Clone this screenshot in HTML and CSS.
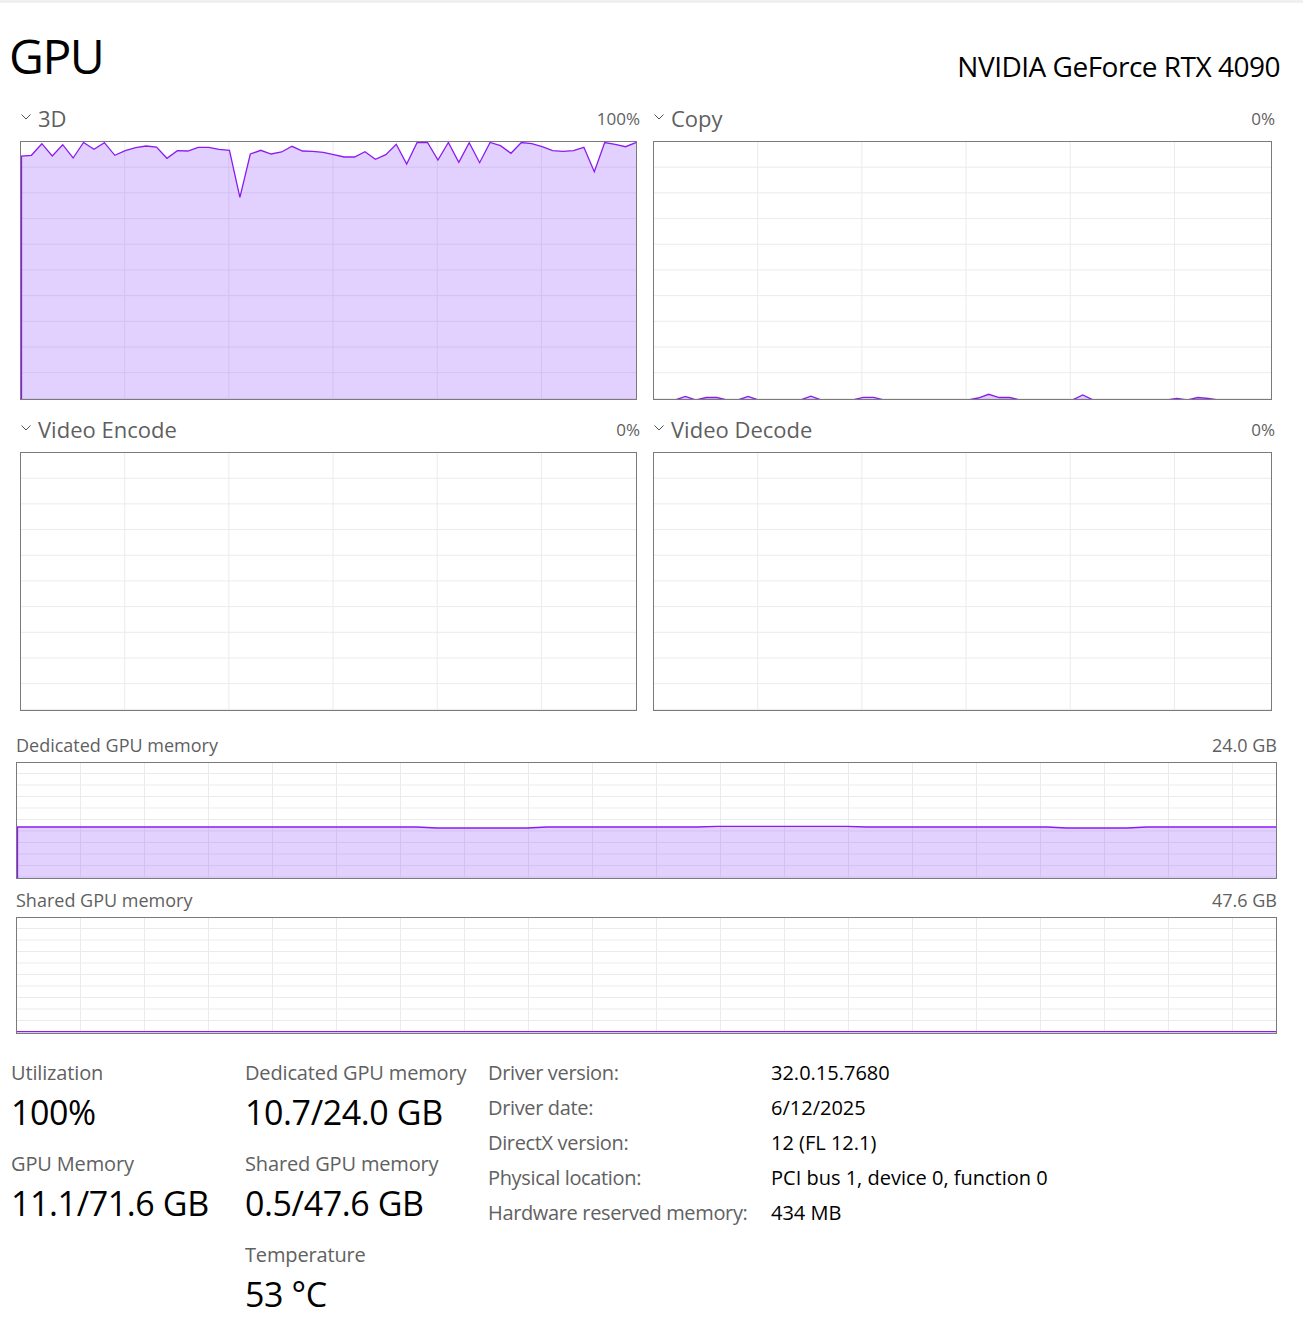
FILE: index.html
```html
<!DOCTYPE html>
<html lang="en">
<head>
<meta charset="utf-8">
<title>GPU</title>
<link rel="stylesheet" href="styles.css">
</head>
<body>
<div class="page">
  <header class="head">
    <h1 class="title">GPU</h1>
    <div class="model">NVIDIA GeForce RTX 4090</div>
  </header>

  <section class="engines">
    <div class="engine">
      <div class="engine-head">
        <span class="engine-name"><svg class="chev" viewBox="0 0 10 6"><polyline points="0.5,0.5 5,5 9.5,0.5"/></svg>3D</span>
        <span class="engine-pct">100%</span>
      </div>
      <div class="graph graph-engine">
        <svg viewBox="0 0 615 257" preserveAspectRatio="none">
          <polygon class="area" points="0,257 0,14 10.42,13.3 20.85,1.7 31.27,14 41.69,2.7 52.12,16 62.54,0.5 72.97,7.3 83.39,0.7 93.81,13.3 104.24,8.7 114.66,5.7 125.08,4 135.51,5 145.93,16.3 156.36,8.7 166.78,9 177.2,5.3 187.63,5.3 198.05,7.3 208.47,8.3 218.9,55.3 229.32,12 239.75,8.3 250.17,12 260.59,10 271.02,4.3 281.44,9 291.86,9.3 302.29,10.3 312.71,12.7 323.14,15 333.56,15 343.98,9.7 354.41,17.3 364.83,12.7 375.25,2.3 385.68,22 396.1,0.5 406.53,0.5 416.95,18 427.37,0.5 437.8,20.3 448.22,0.7 458.64,20.7 469.07,0.5 479.49,3.7 489.92,11.3 500.34,0.5 510.76,1.7 521.19,4.7 531.61,8.7 542.03,9.3 552.46,8.7 562.88,5.3 573.31,29.7 583.73,0.5 594.15,2.3 604.58,4.7 615,0.5 615,257"/>
          <polyline class="line" points="0.5,257 0.5,14 10.42,13.3 20.85,1.7 31.27,14 41.69,2.7 52.12,16 62.54,0.5 72.97,7.3 83.39,0.7 93.81,13.3 104.24,8.7 114.66,5.7 125.08,4 135.51,5 145.93,16.3 156.36,8.7 166.78,9 177.2,5.3 187.63,5.3 198.05,7.3 208.47,8.3 218.9,55.3 229.32,12 239.75,8.3 250.17,12 260.59,10 271.02,4.3 281.44,9 291.86,9.3 302.29,10.3 312.71,12.7 323.14,15 333.56,15 343.98,9.7 354.41,17.3 364.83,12.7 375.25,2.3 385.68,22 396.1,0.5 406.53,0.5 416.95,18 427.37,0.5 437.8,20.3 448.22,0.7 458.64,20.7 469.07,0.5 479.49,3.7 489.92,11.3 500.34,0.5 510.76,1.7 521.19,4.7 531.61,8.7 542.03,9.3 552.46,8.7 562.88,5.3 573.31,29.7 583.73,0.5 594.15,2.3 604.58,4.7 615,0.5"/>
        </svg>
      </div>
    </div>

    <div class="engine">
      <div class="engine-head">
        <span class="engine-name"><svg class="chev" viewBox="0 0 10 6"><polyline points="0.5,0.5 5,5 9.5,0.5"/></svg>Copy</span>
        <span class="engine-pct">0%</span>
      </div>
      <div class="graph graph-engine">
        <svg viewBox="0 0 615 257" preserveAspectRatio="none">
          <polygon class="area" points="0,258 10.42,258 20.85,258 31.27,254.5 41.69,258 52.12,255.5 62.54,255.5 72.97,258 83.39,258 93.81,254.5 104.24,258 114.66,258 125.08,258 135.51,258 145.93,258 156.36,254.2 166.78,258 177.2,258 187.63,258 198.05,258 208.47,255.3 218.9,255.3 229.32,258 239.75,258 250.17,258 260.59,258 271.02,258 281.44,258 291.86,258 302.29,258 312.71,258 323.14,256 333.56,252.3 343.98,255.5 354.41,255.5 364.83,258 375.25,258 385.68,258 396.1,258 406.53,258 416.95,258 427.37,253 437.8,258 448.22,258 458.64,258 469.07,258 479.49,258 489.92,258 500.34,258 510.76,258 521.19,256.3 531.61,258 542.03,255.5 552.46,256.5 562.88,258 573.31,258 583.73,258 594.15,258 604.58,258 615,258"/>
          <polyline class="line" points="0,258 10.42,258 20.85,258 31.27,254.5 41.69,258 52.12,255.5 62.54,255.5 72.97,258 83.39,258 93.81,254.5 104.24,258 114.66,258 125.08,258 135.51,258 145.93,258 156.36,254.2 166.78,258 177.2,258 187.63,258 198.05,258 208.47,255.3 218.9,255.3 229.32,258 239.75,258 250.17,258 260.59,258 271.02,258 281.44,258 291.86,258 302.29,258 312.71,258 323.14,256 333.56,252.3 343.98,255.5 354.41,255.5 364.83,258 375.25,258 385.68,258 396.1,258 406.53,258 416.95,258 427.37,253 437.8,258 448.22,258 458.64,258 469.07,258 479.49,258 489.92,258 500.34,258 510.76,258 521.19,256.3 531.61,258 542.03,255.5 552.46,256.5 562.88,258 573.31,258 583.73,258 594.15,258 604.58,258 615,258"/>
        </svg>
      </div>
    </div>

    <div class="engine">
      <div class="engine-head">
        <span class="engine-name"><svg class="chev" viewBox="0 0 10 6"><polyline points="0.5,0.5 5,5 9.5,0.5"/></svg>Video Encode</span>
        <span class="engine-pct">0%</span>
      </div>
      <div class="graph graph-engine"></div>
    </div>

    <div class="engine">
      <div class="engine-head">
        <span class="engine-name"><svg class="chev" viewBox="0 0 10 6"><polyline points="0.5,0.5 5,5 9.5,0.5"/></svg>Video Decode</span>
        <span class="engine-pct">0%</span>
      </div>
      <div class="graph graph-engine"></div>
    </div>
  </section>

  <section class="mem">
    <div class="mem-head"><span>Dedicated GPU memory</span><span>24.0 GB</span></div>
    <div class="graph graph-mem">
      <svg viewBox="0 0 1259 115" preserveAspectRatio="none">
        <polygon class="area" points="0,115 0,64 400,64 420,65 510,65 530,64 680,64 700,63.4 830,63.4 850,64 1030,64 1050,65 1110,65 1130,64 1259,64 1259,115"/>
        <polyline class="line" points="0.5,115 0.5,64 400,64 420,65 510,65 530,64 680,64 700,63.4 830,63.4 850,64 1030,64 1050,65 1110,65 1130,64 1259,64"/>
      </svg>
    </div>
    <div class="mem-head mem-head-second"><span>Shared GPU memory</span><span>47.6 GB</span></div>
    <div class="graph graph-mem">
      <svg viewBox="0 0 1259 115" preserveAspectRatio="none">
        <polyline class="line" points="0,113.6 1259,113.6"/>
      </svg>
    </div>
  </section>

  <section class="stats">
    <div class="stat-col">
      <div class="stat">
        <div class="stat-label">Utilization</div>
        <div class="stat-value">100%</div>
      </div>
      <div class="stat">
        <div class="stat-label">GPU Memory</div>
        <div class="stat-value">11.1/71.6 GB</div>
      </div>
    </div>
    <div class="stat-col">
      <div class="stat">
        <div class="stat-label">Dedicated GPU memory</div>
        <div class="stat-value">10.7/24.0 GB</div>
      </div>
      <div class="stat">
        <div class="stat-label">Shared GPU memory</div>
        <div class="stat-value">0.5/47.6 GB</div>
      </div>
      <div class="stat">
        <div class="stat-label">Temperature</div>
        <div class="stat-value">53 °C</div>
      </div>
    </div>
    <dl class="props">
      <dt>Driver version:</dt><dd>32.0.15.7680</dd>
      <dt>Driver date:</dt><dd>6/12/2025</dd>
      <dt>DirectX version:</dt><dd>12 (FL 12.1)</dd>
      <dt>Physical location:</dt><dd>PCI bus 1, device 0, function 0</dd>
      <dt>Hardware reserved memory:</dt><dd>434 MB</dd>
    </dl>
  </section>
</div>
</body>
</html>
```

FILE: styles.css
```css
html, body {
  margin: 0;
  padding: 0;
  background: #ffffff;
}

body {
  font-family: "Open Sans", "Noto Sans", sans-serif;
  color: #000000;
}

.page {
  border-top: 3px solid #f0f0f0;
  min-height: 1314px;
}

/* Header */
.head {
  height: 100px;
  display: flex;
  justify-content: space-between;
  align-items: flex-start;
  padding: 0 23px 0 9px;
  box-sizing: border-box;
}

.title {
  margin: 23px 0 0;
  font-size: 48px;
  line-height: 60px;
  font-weight: 400;
  letter-spacing: -1.5px;
}

.model {
  margin-top: 45px;
  font-size: 28px;
  line-height: 36px;
  letter-spacing: -0.5px;
}

/* Engine graphs */
.engines {
  display: grid;
  grid-template-columns: 620px 622px;
  column-gap: 13px;
  row-gap: 14px;
  padding-left: 20px;
}

.engine-head {
  height: 30px;
  display: flex;
  justify-content: space-between;
  align-items: center;
  margin-bottom: 8px;
  color: #5f5f5f;
}

.engine-name {
  display: flex;
  align-items: center;
  font-size: 22px;
}

.chev {
  width: 10px;
  height: 6px;
  margin: 0 7px 3px 1px;
  fill: none;
  stroke: #555555;
  stroke-width: 1;
}

.engine-pct {
  font-size: 17px;
}

.graph {
  box-sizing: border-box;
  border: 1px solid #7a7a7a;
  background-color: #ffffff;
  background-image:
    linear-gradient(to right, #ebebeb 1px, transparent 1px),
    linear-gradient(to bottom, #ebebeb 1px, transparent 1px);
}

.graph svg {
  display: block;
  width: 100%;
  height: 100%;
}

.graph-engine {
  width: calc(100% - 3px);
  height: 259px;
  background-size: 104.2px 25.7px;
  background-position: 103.2px 24.7px;
}

.graph-mem {
  height: 117px;
  background-size: 64px 11.5px;
  background-position: 63px 10px;
}

.area {
  fill: rgba(139, 67, 251, 0.25);
  stroke: none;
}

.line {
  fill: none;
  stroke: #8a1cf2;
  stroke-width: 1.3;
  vector-effect: non-scaling-stroke;
}

/* Memory graphs */
.mem {
  padding: 0 26px 0 16px;
  margin-top: 22px;
}

.mem-head {
  height: 24px;
  display: flex;
  justify-content: space-between;
  align-items: center;
  margin-bottom: 5px;
  font-size: 18px;
  color: #5f5f5f;
}

.mem-head-second {
  margin-top: 9px;
}

/* Stats */
.stats {
  display: grid;
  grid-template-columns: 234px 243px 1fr;
  padding-left: 11px;
  margin-top: 25px;
}

.stat {
  margin-bottom: 13px;
}

.stat-label {
  font-size: 20px;
  line-height: 28px;
  color: #616161;
  letter-spacing: -0.15px;
}

.stat-value {
  font-size: 34px;
  line-height: 50px;
  letter-spacing: -0.4px;
}

.props {
  display: grid;
  grid-template-columns: 283px auto;
  align-content: start;
  margin: -4.5px 0 0;
  font-size: 20px;
  line-height: 35px;
}

.props dt {
  color: #616161;
  letter-spacing: -0.35px;
}

.props dd {
  margin: 0;
  color: #000000;
}
```
